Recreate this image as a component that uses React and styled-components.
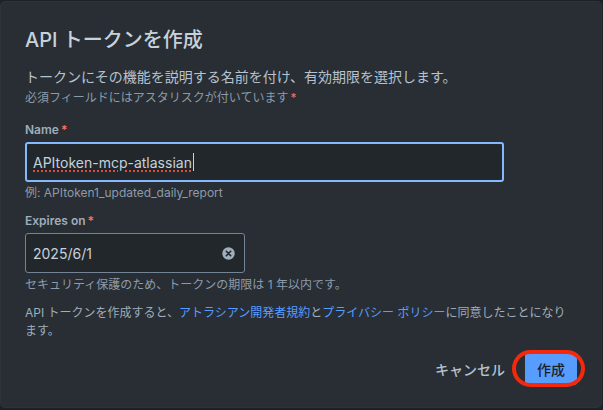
import React from 'react';
import styled, { createGlobalStyle } from 'styled-components';

const GlobalStyle = createGlobalStyle`
    html, body {
        margin: 0;
        padding: 0;
        background: #1d2125;
    }
    body {
        font-family: Inter, "Noto Sans CJK JP", sans-serif;
        -webkit-font-smoothing: antialiased;
    }
`;

const Page = styled.div`
    padding: 2px 2px 2px 1px;
    width: 603px;
    height: 410px;
    box-sizing: border-box;
`;

const Dialog = styled.div`
    width: 600px;
    box-sizing: border-box;
    background: #282e33;
    border-radius: 4px;
    box-shadow: 0 0 0 1px rgba(188, 214, 240, 0.1);
    padding: 26px 24px 22px;
    display: flex;
    flex-direction: column;
`;

const Title = styled.h1`
    margin: 0;
    font-size: 20px;
    line-height: 24px;
    font-weight: 500;
    color: #c7d1db;
`;

const Description = styled.p`
    margin: 15px 0 0;
    font-size: 14px;
    line-height: 20px;
    color: #b6c2cf;
`;

const Small = styled.p`
    margin: ${p => p.$top || 0}px 0 0;
    font-size: 12px;
    line-height: 16px;
    color: ${p => p.$muted ? '#8c9bab' : '#9fadbc'};
`;

const Asterisk = styled.span`
    color: #f87168;
    margin-left: 2px;
`;

const Label = styled.label`
    display: block;
    margin-top: ${p => p.$top}px;
    font-size: 12px;
    line-height: 16px;
    font-weight: 600;
    color: #9fadbc;
`;

const Field = styled.div`
    margin-top: 4px;
    width: ${p => p.$width}px;
    height: 40px;
    box-sizing: border-box;
    background: #22272b;
    border: ${p => p.$focused ? '2px solid #85b8ff' : '1px solid #738496'};
    border-radius: 3px;
    display: flex;
    align-items: center;
    padding: 0 ${p => p.$focused ? 6 : 7}px;
    font-size: 14px;
    color: #c7d1db;
`;

const SpellText = styled.span`
    text-decoration: underline dotted #e2483d;
    text-decoration-thickness: 2px;
    text-underline-offset: 3px;
`;

const Caret = styled.span`
    display: inline-block;
    width: 1px;
    height: 18px;
    margin-left: 1px;
    background: #c7d1db;
`;

const FieldValue = styled.span`
    flex: 1;
`;

const ClearButton = styled.span`
    display: flex;
    width: 16px;
    height: 16px;
    align-items: center;
    justify-content: center;
    margin-right: 1px;
`;

const Terms = styled.p`
    margin: 11px 0 0;
    font-size: 12px;
    line-height: 18px;
    color: #9fadbc;
`;

const TermsLink = styled.a`
    color: #579dff;
    text-decoration: none;
`;

const Footer = styled.div`
    margin-top: 13px;
    display: flex;
    justify-content: flex-end;
    align-items: center;
    gap: 8px;
`;

const Button = styled.button`
    height: 32px;
    padding: 0 12px;
    border: none;
    border-radius: 3px;
    font-family: inherit;
    font-size: 14px;
    font-weight: 500;
    background: ${p => p.$primary ? '#579dff' : 'transparent'};
    color: ${p => p.$primary ? '#1d2125' : '#b6c2cf'};
    cursor: pointer;
`;

const Highlight = styled.div`
    position: relative;
    display: flex;
`;

const Ring = styled.span`
    position: absolute;
    left: -13px;
    right: -8px;
    top: -3px;
    bottom: -2px;
    border: 4px solid #f5280c;
    border-radius: 20px;
    pointer-events: none;
`;

const ClearIcon = () => (
    <svg width="13" height="13" viewBox="0 0 13 13">
        <circle cx="6.5" cy="6.5" r="6.2" fill="#9fadbc" />
        <path d="M4.3 4.3 L8.7 8.7 M8.7 4.3 L4.3 8.7" stroke="#22272b" strokeWidth="1.6" strokeLinecap="round" />
    </svg>
);

export default function App() {
    return (
        <Page>
            <GlobalStyle />
            <Dialog>
                <Title>API トークンを作成</Title>
                <Description>トークンにその機能を説明する名前を付け、有効期限を選択します。</Description>
                <Small $top={3} $muted>必須フィールドにはアスタリスクが付いています<Asterisk>*</Asterisk></Small>

                <Label $top={16}>Name<Asterisk>*</Asterisk></Label>
                <Field $width={479} $focused>
                    <SpellText>APItoken-mcp-atlassian</SpellText>
                    <Caret />
                </Field>
                <Small $top={3} $muted>例: APItoken1_updated_daily_report</Small>

                <Label $top={12}>Expires on<Asterisk>*</Asterisk></Label>
                <Field $width={220}>
                    <FieldValue>2025/6/1</FieldValue>
                    <ClearButton><ClearIcon /></ClearButton>
                </Field>
                <Small $top={4} $muted>セキュリティ保護のため、トークンの期限は 1 年以内です。</Small>

                <Terms>
                    API トークンを作成すると、<TermsLink href="#">アトラシアン開発者規約</TermsLink>と<TermsLink href="#">プライバシー ポリシー</TermsLink>に同意したことになります。
                </Terms>

                <Footer>
                    <Button>キャンセル</Button>
                    <Highlight>
                        <Button $primary>作成</Button>
                        <Ring />
                    </Highlight>
                </Footer>
            </Dialog>
        </Page>
    );
}
